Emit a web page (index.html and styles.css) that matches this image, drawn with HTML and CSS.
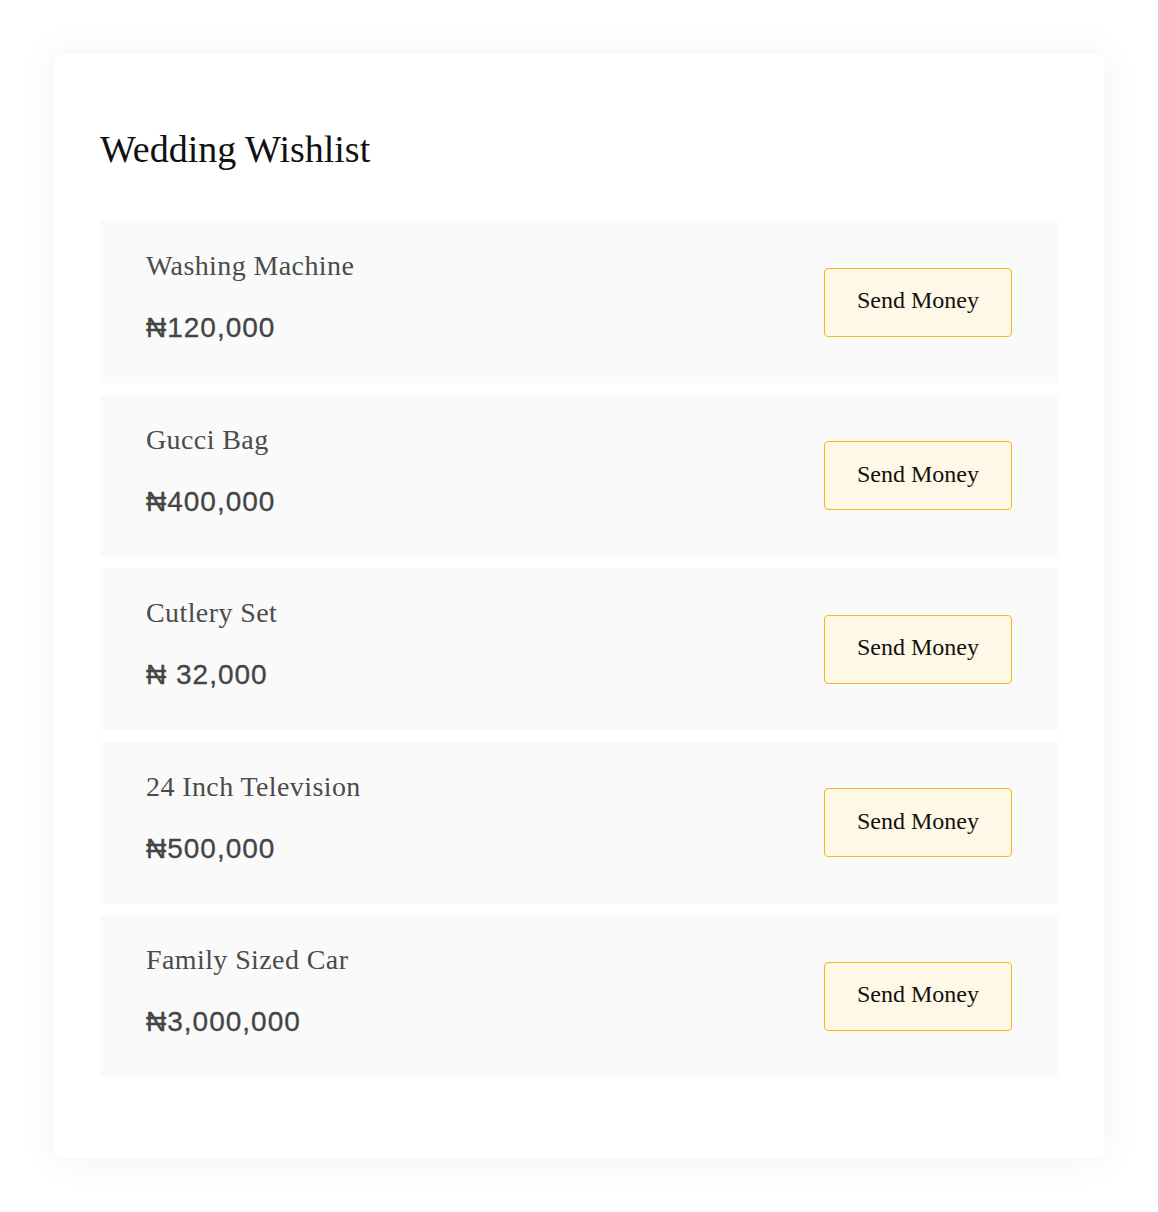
FILE: index.html
```html
<!DOCTYPE html>
<html lang="en">
<head>
    <meta charset="UTF-8">
    <meta name="viewport" content="width=device-width, initial-scale=1.0">
    <title>Wedding Wishlist</title>
    <link rel="stylesheet" href="styles.css">
</head>
<body>
    <div class="card">
        <h1 class="title">Wedding Wishlist</h1>
        <ul class="wishlist">
            <li class="item">
                <div class="item-info">
                    <p class="item-name">Washing Machine</p>
                    <p class="item-price">₦120,000</p>
                </div>
                <button class="send-btn">Send Money</button>
            </li>
            <li class="item">
                <div class="item-info">
                    <p class="item-name">Gucci Bag</p>
                    <p class="item-price">₦400,000</p>
                </div>
                <button class="send-btn">Send Money</button>
            </li>
            <li class="item">
                <div class="item-info">
                    <p class="item-name">Cutlery Set</p>
                    <p class="item-price">₦ 32,000</p>
                </div>
                <button class="send-btn">Send Money</button>
            </li>
            <li class="item">
                <div class="item-info">
                    <p class="item-name">24 Inch Television</p>
                    <p class="item-price">₦500,000</p>
                </div>
                <button class="send-btn">Send Money</button>
            </li>
            <li class="item">
                <div class="item-info">
                    <p class="item-name">Family Sized Car</p>
                    <p class="item-price">₦3,000,000</p>
                </div>
                <button class="send-btn">Send Money</button>
            </li>
        </ul>
    </div>
</body>
</html>
```

FILE: styles.css
```css
body {
    margin: 0;
    padding: 54px;
    background-color: #fff;
    font-family: 'Liberation Serif', serif;
}

.card {
    background-color: #fff;
    border-radius: 6px;
    box-shadow: 0 0 40px rgba(0, 0, 0, 0.06);
    padding: 73px 46px 81px;
}

.title {
    margin: 0 0 50px;
    font-size: 38px;
    font-weight: normal;
    line-height: 44px;
    color: #111;
}

.wishlist {
    list-style-type: none;
    margin: 0;
    padding: 0;
    display: flex;
    flex-direction: column;
    gap: 11.5px;
}

.item {
    background-color: #fafafa;
    height: 162px;
    box-sizing: border-box;
    padding: 0 46px;
    display: flex;
    align-items: center;
    justify-content: space-between;
}

.item-info {
    margin-bottom: 10px;
}

.item-info p {
    margin: 0;
}

.item-name {
    font-size: 28px;
    line-height: 32px;
    letter-spacing: 0.4px;
    color: #4b4b4b;
    margin-bottom: 30px !important;
}

.item-price {
    font-family: 'Liberation Sans', 'DejaVu Sans', sans-serif;
    font-size: 28px;
    line-height: 32px;
    letter-spacing: 1px;
    color: #444;
    -webkit-text-stroke: 0.3px #444;
}

.send-btn {
    width: 188px;
    height: 69px;
    padding: 0 0 3px;
    background-color: #fff8e6;
    border: 1px solid #f7b819;
    border-radius: 4px;
    font-family: 'Liberation Serif', serif;
    font-size: 24px;
    color: #111;
    cursor: pointer;
}
```
